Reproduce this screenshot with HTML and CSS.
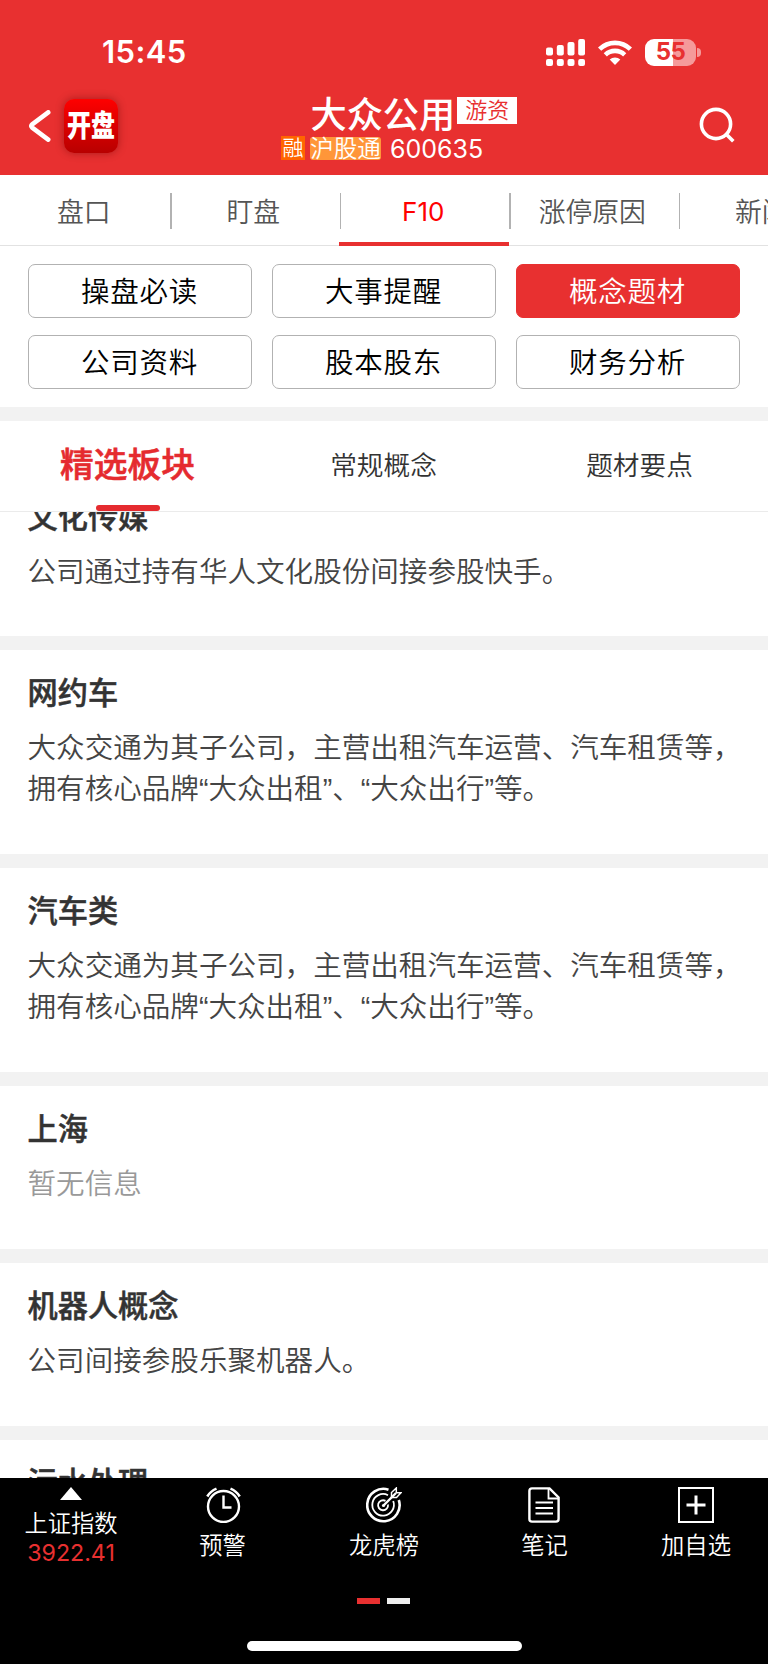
FILE: index.html
```html
<!DOCTYPE html>
<html lang="zh-CN">
<head>
<meta charset="utf-8">
<title>大众公用 600635</title>
<link rel="stylesheet" href="styles.css">
</head>
<body>
<div class="app">
  <header class="header">
    <div class="status">
      <span class="time">15:45</span>
      <div class="status-icons">
        <svg class="signal" viewBox="0 0 39 27" width="39" height="27" fill="#fff">
          <rect x="0" y="8.500" width="7" height="8" rx="2"/><rect x="10.800" y="6" width="7" height="10.500" rx="2"/><rect x="21.500" y="3" width="7" height="13.500" rx="2"/><rect x="32.200" y="0" width="6.800" height="16.500" rx="2"/>
          <rect x="0" y="20" width="7" height="7" rx="2"/><rect x="10.800" y="20" width="7" height="7" rx="2"/><rect x="21.500" y="20" width="7" height="7" rx="2"/><rect x="32.200" y="20" width="6.800" height="7" rx="2"/>
        </svg>
        <svg class="wifi" viewBox="0 0 34 25" width="34" height="25" fill="none" stroke="#fff" stroke-width="4.600">
          <path d="M1.600 9.200a22 22 0 0 1 30.800 0"/>
          <path d="M7.300 14.800a14 14 0 0 1 19.400 0"/>
          <path d="M11.700 19.600a7.600 7.600 0 0 1 10.600 0L17 25z" fill="#fff" stroke="none"/>
        </svg>
        <div class="battery"><span class="battery-text">55</span></div>
        <span class="battery-nub"></span>
      </div>
    </div>
    <div class="nav">
      <div class="nav-left">
        <svg class="back" viewBox="0 0 22 32" width="22" height="32" fill="none" stroke="#fff" stroke-width="4.600" stroke-linecap="round" stroke-linejoin="round"><path d="M19.200 2.300 3.200 14.400Q1.600 16 3.200 17.600L19.200 29.700"/></svg>
        <div class="logo"><span class="logo-text">开盘</span></div>
      </div>
      <div class="stock">
        <div class="stock-top"><span class="stock-name">大众公用</span><span class="tag">游资</span></div>
        <div class="stock-sub"><span class="badge badge-rong">融</span><span class="badge badge-hgt">沪股通</span><span class="code">600635</span></div>
      </div>
      <svg class="search" viewBox="0 0 36 36" width="36" height="36" fill="none" stroke="#fff" stroke-width="3.600"><circle cx="17" cy="17" r="14.600"/><path d="M26.500 26.500 34.300 34.300"/></svg>
    </div>
  </header>

  <nav class="tabs">
    <span class="tab">盘口</span><span class="tab">盯盘</span><span class="tab tab-on">F10</span><span class="tab">涨停原因</span><span class="tab">新闻</span>
  </nav>

  <div class="grid">
    <span class="btn">操盘必读</span><span class="btn">大事提醒</span><span class="btn btn-on">概念题材</span>
    <span class="btn">公司资料</span><span class="btn">股本股东</span><span class="btn">财务分析</span>
  </div>

  <nav class="subtabs">
    <span class="subtab subtab-on">精选板块</span><span class="subtab">常规概念</span><span class="subtab">题材要点</span>
  </nav>

  <main class="scroll">
    <div class="list">
      <section class="card"><h2>文化传媒</h2><p>公司通过持有华人文化股份间接参股快手。</p></section>
      <section class="card"><h2>网约车</h2><p>大众交通为其子公司，主营出租汽车运营、汽车租赁等，<br>拥有核心品牌“大众出租”、“大众出行”等。</p></section>
      <section class="card"><h2>汽车类</h2><p>大众交通为其子公司，主营出租汽车运营、汽车租赁等，<br>拥有核心品牌“大众出租”、“大众出行”等。</p></section>
      <section class="card"><h2>上海</h2><p class="empty">暂无信息</p></section>
      <section class="card"><h2>机器人概念</h2><p>公司间接参股乐聚机器人。</p></section>
      <section class="card"><h2>污水处理</h2></section>
    </div>
  </main>

  <footer class="footer">
    <div class="tools">
      <div class="index"><span class="arrow"></span><span class="label">上证指数</span><span class="value">3922.41</span></div>
      <div class="tool">
        <svg viewBox="0 0 36 36" width="36" height="36" fill="none" stroke="#fff" stroke-width="2.400"><circle cx="18.500" cy="19.500" r="15.500"/><path d="M18.500 8.500V20.500H26.500" /><path d="M2.300 9.500Q5.500 4 11.500 1.600M25.500 1.600Q31.500 4 34.700 9.500" stroke-width="2.600"/></svg>
        <span class="label">预警</span>
      </div>
      <div class="tool">
        <svg viewBox="0 0 36 36" width="36" height="36" fill="none" stroke="#fff"><path d="M22.500 2.700A16.200 16.200 0 1 0 32.800 13" stroke-width="2.600"/><path d="M22 8.200A10.800 10.800 0 1 0 27.200 14" stroke-width="1.800"/><path d="M19.500 13.900A5 5 0 1 0 22 17.500" stroke-width="1.800"/><circle cx="17.500" cy="18.500" r="1.600" fill="#fff" stroke="none"/><path d="M17.500 18.500 30 6" stroke-width="2.400"/><path d="M25.500 10.500V5.500L30.300 1V5.700H35L30.500 10.500Z" stroke-width="1.500"/></svg>
        <span class="label">龙虎榜</span>
      </div>
      <div class="tool">
        <svg viewBox="0 0 36 36" width="36" height="36" fill="none" stroke="#fff" stroke-width="2.400"><path d="M5 1.400H22.500L31.600 10.500V32Q31.600 34.600 29 34.600H5Q2.400 34.600 2.400 32V4Q2.400 1.400 5 1.400Z"/><path d="M21.500 2V11.500H31" stroke-width="1.800"/><path d="M8.500 15.500H26M8.500 21H26M8.500 26.500H26" stroke-width="1.900"/></svg>
        <span class="label">笔记</span>
      </div>
      <div class="tool">
        <svg viewBox="0 0 36 36" width="36" height="36" fill="none" stroke="#fff"><rect x="1" y="1" width="34" height="34" stroke-width="2"/><path d="M18 8.500V27.500M8.500 18H27.500" stroke-width="3"/></svg>
        <span class="label">加自选</span>
      </div>
    </div>
    <div class="pager"><span class="page page-on"></span><span class="page"></span></div>
    <div class="home"></div>
  </footer>
</div>
</body>
</html>
```
FILE: styles.css
```css
* { box-sizing: border-box; }
body {
  margin: 0;
  background: #fff;
  font-family: "Liberation Sans", "Noto Sans CJK SC", sans-serif;
  font-weight: 350;
  text-spacing-trim: space-all;
}
.app {
  width: 768px;
  height: 1665px;
  display: flex;
  flex-direction: column;
  overflow: hidden;
  white-space: nowrap;
}
svg { display: block; flex: none; }

.header { height: 174.500px; flex: none; background: #e83030; color: #fff; }
.status {
  height: 90px;
  padding: 14px 67px 0 102px;
  display: flex;
  justify-content: space-between;
  align-items: center;
}
.time { font: 600 31px/38px Inter, sans-serif; letter-spacing: 0.400px; }
.status-icons { display: flex; align-items: center; }
.wifi { margin-left: 13px; }
.battery {
  width: 51px;
  height: 27px;
  margin-left: 13.500px;
  border-radius: 9px;
  background: linear-gradient(90deg, #fff 55%, #f59a9a 55%);
  display: flex;
  justify-content: center;
  align-items: center;
}
.battery-text { font: 700 24px/28px Inter, sans-serif; color: #e83030; letter-spacing: -0.500px; }
.battery-nub { width: 4px; height: 9px; margin-left: 1px; border-radius: 0 5px 5px 0; background: #f59a9a; }

.nav { display: grid; grid-template-columns: 240px 288px 240px; height: 84px; }
.nav-left { display: flex; align-items: center; padding: 0 0 13px 28.500px; }
.logo {
  width: 54px;
  height: 54px;
  margin-left: 13.500px;
  border-radius: 10px;
  background: linear-gradient(#fe0000, #b80000);
  box-shadow: 0 0 9px rgba(90, 0, 0, 0.450);
  display: flex;
  align-items: center;
  justify-content: center;
}
.logo-text {
  font-size: 24px;
  line-height: 32px;
  font-weight: 900;
  transform: scaleY(1.250);
}
.stock { display: flex; flex-direction: column; }
.stock-top { display: flex; height: 46px; padding: 6.500px 0 0 70.500px; }
.stock-name { font-size: 36.200px; line-height: 37px; font-weight: 500; }
.tag {
  width: 60px;
  height: 27.500px;
  margin-left: 2px;
  background: #fff;
  color: #e83030;
  font-size: 22px;
  line-height: 27px;
  text-align: center;
}
.stock-sub { display: flex; align-items: center; height: 24px; padding-left: 41px; }
.badge { text-align: center; }
.badge-rong { width: 24px; height: 24px; background: #ff6500; font-size: 21px; line-height: 24px; }
.badge-hgt { width: 71px; height: 23px; margin-left: 5px; border-radius: 3px; background: #ff9639; font-size: 23.600px; line-height: 24px; }
.code { margin-left: 9px; font: 400 25px/26px Inter, sans-serif; padding-top: 1px; }
.search { margin: 17px 0 0 171px; }

.tabs { display: flex; height: 71px; flex: none; border-bottom: 1.300px solid #e2e2e2; }
.tab {
  position: relative;
  width: 169.500px;
  flex: none;
  padding-right: 2px;
  color: #555;
  font-size: 26.800px;
  line-height: 77px;
  text-align: center;
}
.tab::after {
  content: "";
  position: absolute;
  right: -2px;
  top: 18.500px;
  width: 1.500px;
  height: 36px;
  background: #b2b2b2;
}
.tab-on { padding-right: 1px; color: #f00; font-family: Inter, sans-serif; font-weight: 400; font-size: 26px; line-height: 73px; }
.tab-on::before { content: ""; position: absolute; left: 0; bottom: -1px; width: 100%; height: 4px; background: #e83030; }

.grid {
  height: 161.500px;
  flex: none;
  padding: 18.500px 28px 0;
  display: grid;
  grid-template-columns: repeat(3, 224px);
  grid-auto-rows: 54px;
  gap: 17px 20px;
}
.btn {
  padding-right: 1px;
  border: 1.300px solid #b2b2b2;
  border-radius: 7px;
  color: #000;
  font-size: 28.500px;
  line-height: 54px;
  letter-spacing: 0.800px;
  text-align: center;
}
.btn-on { background: #e83030; border-color: #e83030; color: #fff; }

.subtabs {
  height: 105px;
  flex: none;
  border-top: 14px solid #f2f2f2;
  border-bottom: 1.500px solid #ebebeb;
  display: grid;
  grid-template-columns: repeat(3, 1fr);
}
.subtab { position: relative; padding-right: 1px; text-align: center; font-size: 26.700px; line-height: 90px; color: #333; }
.subtab-on { color: #e52b2f; font-size: 33.700px; font-weight: 500; line-height: 89px; -webkit-text-stroke: 0.600px #e52b2f; }
.subtab-on::after {
  content: "";
  position: absolute;
  left: 96px;
  bottom: 0;
  width: 64px;
  height: 6px;
  border-radius: 3px;
  background: #e52b2f;
}

.scroll { flex: none; height: 966px; overflow: hidden; }
.list { margin-top: -38.500px; }
.card { padding: 24px 27.500px 43.800px; border-bottom: 14px solid #f2f2f2; }
.card h2 { margin: 0 0 14px; font-size: 30.200px; line-height: 40px; font-weight: 500; color: #333; -webkit-text-stroke: 0.500px #333; }
.card p { margin: 0; font-size: 28.570px; line-height: 41.100px; color: #444; }
.card .empty { color: #999; }

.footer { height: 186px; flex: none; background: #000; color: #fff; }
.tools { height: 112px; display: grid; grid-template-columns: 142px 161px 162px 159px 144px; }
.index, .tool { display: flex; flex-direction: column; align-items: center; }
.tool { padding-top: 9px; }
.label { font-size: 23.300px; line-height: 30px; }
.tool .label { margin-top: 8px; }
.arrow { margin-top: 9px; border: 11.500px solid transparent; border-top: 0; border-bottom: 13px solid #fff; }
.index .label { margin-top: 9px; }
.value { font: 400 23.200px/29px Inter, sans-serif; color: #e83030; }
.pager { display: flex; justify-content: center; gap: 7px; padding: 7.500px 1px 0 0; height: 51px; }
.page { width: 23px; height: 6px; background: #eee; }
.page-on { background: #e83030; }
.home { width: 275px; height: 10px; margin: 0 auto; border-radius: 5px; background: #fff; }
```
